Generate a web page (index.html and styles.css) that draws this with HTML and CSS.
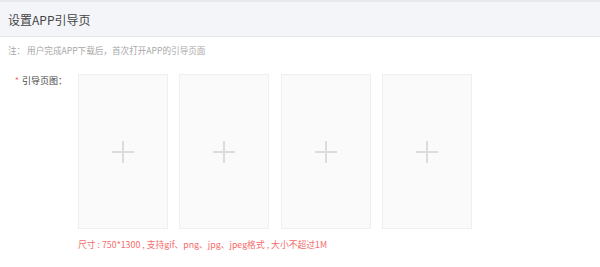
FILE: index.html
```html
<!DOCTYPE html>
<html lang="zh">
<head>
<meta charset="utf-8">
<link rel="stylesheet" href="styles.css">
</head>
<body>
<div class="topbar"></div>
<div class="header"><span class="title">设置APP引导页</span></div>
<div class="note">注： 用户完成APP下载后，首次打开APP的引导页面</div>
<div class="form-row">
  <div class="label"><span class="star">*</span>引导页图：</div>
  <div class="field">
    <div class="uploads">
      <div class="upload"><span class="plus"></span></div>
      <div class="upload"><span class="plus"></span></div>
      <div class="upload"><span class="plus"></span></div>
      <div class="upload"><span class="plus"></span></div>
    </div>
    <div class="hint">尺寸 : 750*1300 , 支持gif、png、jpg、jpeg格式 , 大小不超过1M</div>
  </div>
</div>
</body>
</html>
```
FILE: styles.css
```css
html, body {
  margin: 0;
  padding: 0;
  background: #fff;
  font-family: "Noto Sans CJK SC", "Noto Sans", sans-serif;
}
.topbar {
  height: 2px;
  background: #e8e9ed;
}
.header {
  height: 34px;
  display: flex;
  align-items: center;
  padding-left: 8px;
  background: #f4f5f9;
  border-bottom: 1px solid #e4e7ec;
}
.title {
  font-size: 12px;
  color: #444;
}
.note {
  padding: 7px 0 0 8px;
  font-size: 8.6px;
  line-height: 12px;
  color: #a8a8a8;
}
.form-row {
  display: flex;
  margin-top: 18px;
}
.label {
  width: 67px;
  text-align: right;
  padding-right: 11px;
  font-size: 9px;
  line-height: 14px;
  color: #444;
}
.star {
  color: #f56c6c;
  margin-right: 3px;
}
.uploads {
  display: flex;
  gap: 11.4px;
}
.upload {
  width: 88px;
  height: 153px;
  background: #fafafa;
  border: 1px solid #efefef;
  display: flex;
  align-items: center;
  justify-content: center;
}
.plus {
  position: relative;
  width: 22px;
  height: 22px;
}
.plus::before, .plus::after {
  content: "";
  position: absolute;
  background: #dcdcdc;
}
.plus::before {
  left: 0;
  right: 0;
  top: 10px;
  height: 2px;
}
.plus::after {
  top: 0;
  bottom: 0;
  left: 10px;
  width: 2px;
}
.hint {
  margin-top: 10px;
  font-size: 8.8px;
  line-height: 12px;
  color: #f56c6c;
}
```
